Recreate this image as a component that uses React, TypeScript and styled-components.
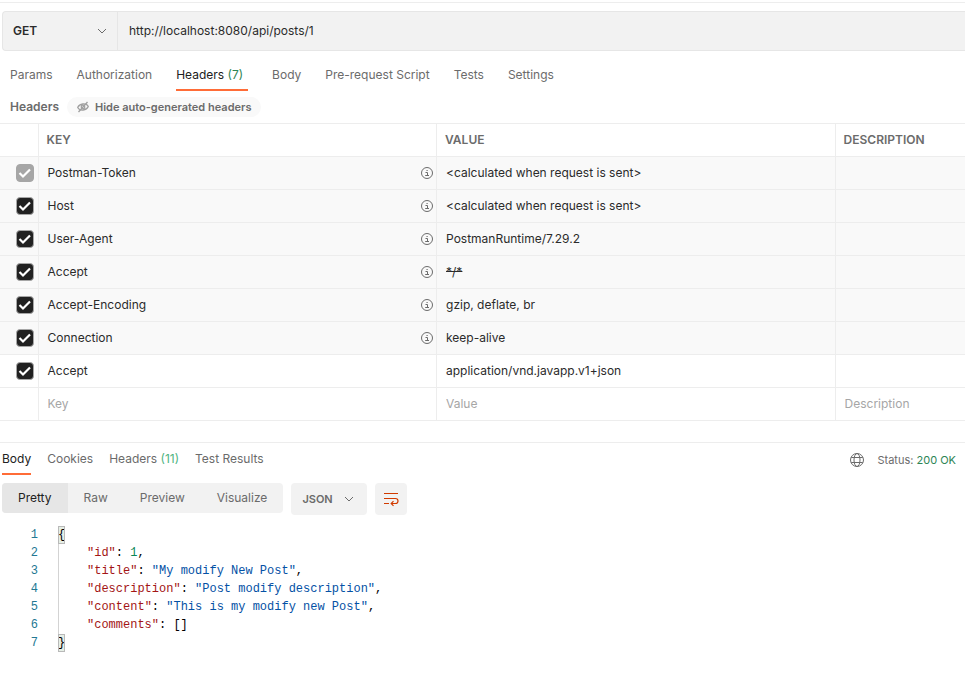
import React from "react";
import styled, { createGlobalStyle } from "styled-components";

const GlobalStyle = createGlobalStyle`
  * { box-sizing: border-box; }
  body {
    margin: 0;
    background: #fff;
    color: #2b2b2b;
    font: 12px/16px Inter, "Liberation Sans", sans-serif;
    overflow-x: hidden;
  }
  button, input, select { font: inherit; color: inherit; border: 0; margin: 0; padding: 0; background: none; }
`;

const Page = styled.main`
  display: flex;
  flex-direction: column;
  padding-top: 2px;
`;

const RequestBar = styled.form`
  border-top: 1px solid #ededed;
  padding: 8px 0 0 2px;
`;

const UrlBox = styled.div`
  display: flex;
  height: 40px;
  background: #f2f2f2;
  border: 1px solid #e6e6e6;
  border-right: 0;
  border-radius: 4px 0 0 4px;
`;

const MethodField = styled.div`
  display: grid;
  grid-template-columns: 1fr 12px;
  align-items: center;
  width: 115px;
  padding-right: 9px;
  border-right: 1px solid #e6e6e6;
`;

const MethodSelect = styled.select`
  appearance: none;
  grid-area: 1 / 1 / 2 / 3;
  height: 38px;
  padding-left: 10px;
  font-weight: 600;
`;

const FieldIcon = styled.span`
  grid-area: 1 / 2;
  display: flex;
  pointer-events: none;
`;

const UrlInput = styled.input`
  flex: 1;
  min-width: 0;
  padding: 0 11px;
  outline: 0;
`;

const RequestTabs = styled.nav`
  display: flex;
  gap: 24px;
  height: 32px;
  margin-top: 8px;
  padding: 0 10px;
`;

const Tab = styled.button<{ $active?: boolean; $wide?: boolean }>`
  color: ${(p) => (p.$active ? "#212121" : "#6b6b6b")};
  padding: ${(p) => (p.$wide ? "2px 5px 0 0" : "2px 0 0")};
  border-bottom: 2px solid ${(p) => (p.$active ? "#ff6c37" : "transparent")};
  white-space: nowrap;
`;

const Count = styled.span<{ $light?: boolean }>`
  color: ${(p) => (p.$light ? "#4fb47f" : "#2e8555")};
`;

const HeadersBar = styled.div`
  display: flex;
  align-items: center;
  gap: 8px;
  height: 32px;
  padding-left: 10px;
`;

const SectionTitle = styled.h2`
  margin: 0;
  font-size: 12px;
  font-weight: 600;
  color: #6b6b6b;
`;

const HideButton = styled.button`
  display: flex;
  align-items: center;
  gap: 6px;
  height: 20px;
  padding: 0 10px;
  border-radius: 10px;
  background: #f9f9f9;
  color: #6b6b6b;
  font-size: 11px;
  font-weight: 600;
`;

const HeaderTable = styled.table`
  width: 100%;
  table-layout: fixed;
  border-collapse: collapse;
  border-top: 1px solid #ededed;
`;

const CheckCol = styled.col`width: 38px;`;
const MainCol = styled.col`width: 41.3%;`;
const RestCol = styled.col`width: auto;`;

const Row = styled.tr<{ $auto?: boolean }>`
  height: 33px;
  background: ${(p) => (p.$auto ? "#f9f9f9" : "#fff")};
  border-bottom: 1px solid #ededed;
`;

const HeadCell = styled.th`
  padding: 0 8px;
  text-align: left;
  font-weight: 600;
  color: #6b6b6b;
  & + & { border-left: 1px solid #ededed; }
`;

const Cell = styled.td<{ $struck?: boolean }>`
  padding: 0 3px 0 9px;
  text-decoration: ${(p) => (p.$struck ? "line-through" : "none")};
  & + & { border-left: 1px solid #ededed; }
`;

const CheckCell = styled(Cell)`
  padding: 0 0 0 16px;
`;

const KeyContent = styled.div`
  display: flex;
  align-items: center;
  justify-content: space-between;
`;

const CellInput = styled.input`
  display: block;
  width: 100%;
  outline: 0;
  &::placeholder { color: #a6a6a6; opacity: 1; }
`;

const CheckBox = styled.label`
  display: grid;
  width: 18px;
  height: 18px;
`;

const CheckInput = styled.input`
  appearance: none;
  grid-area: 1 / 1;
  border-radius: 4px;
  border: 1px solid #a6a6a6;
  background: #fff;
  &:checked { background: #212121; }
  &:disabled { background: #a6a6a6; }
`;

const CheckMark = styled.svg`
  grid-area: 1 / 1;
  pointer-events: none;
`;

const Response = styled.section`
  margin-top: 21px;
  border-top: 1px solid #ededed;
`;

const ResponseHead = styled.header`
  display: flex;
  justify-content: space-between;
  height: 32px;
  padding: 0 9px 0 2px;
`;

const ResponseTabs = styled.nav`
  display: flex;
  gap: 16px;
`;

const Status = styled.div`
  display: flex;
  align-items: center;
  gap: 13px;
  padding-top: 1px;
  font-size: 11px;
  color: #6b6b6b;
`;

const Toolbar = styled.div`
  display: flex;
  align-items: flex-start;
  gap: 8px;
  padding: 8px 0 0 2px;
`;

const Modes = styled.div`
  display: flex;
  height: 30px;
  border-radius: 4px;
  background: #f2f2f2;
  overflow: hidden;
`;

const Mode = styled.button<{ $active?: boolean }>`
  padding: 0 16px;
  color: ${(p) => (p.$active ? "#212121" : "#6b6b6b")};
  background: ${(p) => (p.$active ? "#e6e6e6" : "transparent")};
`;

const FormatField = styled.div`
  display: grid;
  grid-template-columns: 1fr 12px;
  align-items: center;
  width: 76px;
  height: 32px;
  padding-right: 12px;
  border-radius: 4px;
  background: #f2f2f2;
`;

const FormatSelect = styled.select`
  appearance: none;
  grid-area: 1 / 1 / 2 / 3;
  height: 32px;
  padding-left: 11px;
  font-size: 11px;
  font-weight: 600;
  color: #6b6b6b;
`;

const WrapButton = styled.button`
  display: grid;
  place-items: center;
  width: 32px;
  height: 32px;
  border-radius: 4px;
  background: #f2f2f2;
`;

const Editor = styled.div`
  display: flex;
  margin-top: 11px;
  font: 12px/18px "Liberation Mono", monospace;
`;

const Gutter = styled.div`
  width: 38px;
  text-align: right;
  color: #237893;
`;

const Code = styled.div`
  margin-left: 20px;
  white-space: pre;
  color: #000;
`;

const Nested = styled.div`
  padding-left: 28px;
  border-left: 1px solid #d3d3d3;
`;

const Brace = styled.span`
  display: block;
  width: 7px;
  height: 18px;
  background: #e6efe6;
  outline: 1px solid #b9b9b9;
  outline-offset: -1px;
`;

const Name = styled.span`color: #a31515;`;
const Text = styled.span`color: #0451a5;`;
const Num = styled.span`color: #098658;`;

const Chevron = () => (
  <svg width="12" height="12" viewBox="0 0 12 12" fill="none" stroke="#6b6b6b" aria-hidden="true">
    <path d="M2 4l4 4 4-4" />
  </svg>
);

const InfoIcon = () => (
  <svg width="12" height="12" viewBox="0 0 12 12" fill="none" stroke="#6b6b6b" aria-hidden="true">
    <circle cx="6" cy="6" r="5.5" />
    <path d="M4.5 5.5H6.500v3M4.200 8.500H8M5.500 3.500h1.200" />
  </svg>
);

const HiddenEyeIcon = () => (
  <svg width="12" height="12" viewBox="0 0 12 12" fill="none" stroke="#a0a0a0" strokeWidth="1.3" aria-hidden="true">
    <path d="M.7 6.5C2.5 2.5 9 1.5 11.3 5.5 9.5 9.5 3 10.5 .7 6.5z" />
    <circle cx="6" cy="6" r="1.8" />
    <path d="M1.5 11L10.5 1" />
  </svg>
);

const GlobeIcon = () => (
  <svg width="14" height="14" viewBox="0 0 14 14" fill="none" stroke="#6b6b6b" aria-hidden="true">
    <circle cx="7" cy="7" r="6.5" />
    <ellipse cx="7" cy="7" rx="3" ry="6.5" />
    <path d="M1.2 4.5h11.6M1.2 9.5h11.6" />
  </svg>
);

const WrapIcon = () => (
  <svg width="16" height="16" viewBox="0 0 16 16" fill="none" stroke="#d13b00" strokeWidth="1.2" aria-hidden="true">
    <path d="M1 2.5h14M1 7.5h11.5a2.500 2.500 0 010 5H8.500M1 12.500h5M10.500 10.200L8.200 12.500l2.300 2.300" />
  </svg>
);

const requestTabs = ["Params", "Authorization", "Headers", "Body", "Pre-request Script", "Tests", "Settings"];
const modes = ["Pretty", "Raw", "Preview", "Visualize"];

const headers = [
  { key: "Postman-Token", value: "<calculated when request is sent>", auto: true, locked: true },
  { key: "Host", value: "<calculated when request is sent>", auto: true },
  { key: "User-Agent", value: "PostmanRuntime/7.29.2", auto: true },
  { key: "Accept", value: "*/*", auto: true, struck: true },
  { key: "Accept-Encoding", value: "gzip, deflate, br", auto: true },
  { key: "Connection", value: "keep-alive", auto: true },
  { key: "Accept", value: "application/vnd.javapp.v1+json" },
];

const fields: [string, React.ReactNode][] = [
  ["id", <Num>1</Num>],
  ["title", <Text>"My modify New Post"</Text>],
  ["description", <Text>"Post modify description"</Text>],
  ["content", <Text>"This is my modify new Post"</Text>],
  ["comments", "[]"],
];

export default function App() {
  return (
    <>
      <GlobalStyle />
      <Page>
        <RequestBar onSubmit={(e) => e.preventDefault()}>
          <UrlBox>
            <MethodField>
              <MethodSelect aria-label="Method">
                <option>GET</option>
              </MethodSelect>
              <FieldIcon><Chevron /></FieldIcon>
            </MethodField>
            <UrlInput aria-label="Request URL" defaultValue="http://localhost:8080/api/posts/1" />
          </UrlBox>
        </RequestBar>
        <RequestTabs>
          {requestTabs.map((t) => (
            <Tab key={t} $active={t === "Headers"} $wide={t === "Headers"}>
              {t}{t === "Headers" && <Count> (7)</Count>}
            </Tab>
          ))}
        </RequestTabs>
        <HeadersBar>
          <SectionTitle>Headers</SectionTitle>
          <HideButton><HiddenEyeIcon />Hide auto-generated headers</HideButton>
        </HeadersBar>
        <HeaderTable>
          <colgroup><CheckCol /><MainCol /><MainCol /><RestCol /></colgroup>
          <thead>
            <Row>
              <HeadCell aria-label="Enabled" />
              <HeadCell>KEY</HeadCell>
              <HeadCell>VALUE</HeadCell>
              <HeadCell>DESCRIPTION</HeadCell>
            </Row>
          </thead>
          <tbody>
            {headers.map((h, i) => (
              <Row key={i} $auto={h.auto}>
                <CheckCell>
                  <CheckBox>
                    <CheckInput type="checkbox" defaultChecked disabled={h.locked} aria-label={`Send ${h.key}`} />
                    <CheckMark width="18" height="18" viewBox="0 0 18 18" fill="none" stroke="#fff" strokeWidth="2.2">
                      <path d="M3.5 9l3.5 3.5 7-7" />
                    </CheckMark>
                  </CheckBox>
                </CheckCell>
                <Cell><KeyContent>{h.key}{h.auto && <InfoIcon />}</KeyContent></Cell>
                <Cell $struck={h.struck}>{h.value}</Cell>
                <Cell />
              </Row>
            ))}
            <Row>
              <Cell />
              <Cell><CellInput aria-label="Key" placeholder="Key" /></Cell>
              <Cell><CellInput aria-label="Value" placeholder="Value" /></Cell>
              <Cell><CellInput aria-label="Description" placeholder="Description" /></Cell>
            </Row>
          </tbody>
        </HeaderTable>
        <Response>
          <ResponseHead>
            <ResponseTabs>
              <Tab $active>Body</Tab>
              <Tab>Cookies</Tab>
              <Tab>Headers <Count $light>(11)</Count></Tab>
              <Tab>Test Results</Tab>
            </ResponseTabs>
            <Status><GlobeIcon /><span>Status: <Count>200 OK</Count></span></Status>
          </ResponseHead>
          <Toolbar>
            <Modes>
              {modes.map((m) => <Mode key={m} $active={m === "Pretty"}>{m}</Mode>)}
            </Modes>
            <FormatField>
              <FormatSelect aria-label="Format"><option>JSON</option></FormatSelect>
              <FieldIcon><Chevron /></FieldIcon>
            </FormatField>
            <WrapButton aria-label="Wrap lines"><WrapIcon /></WrapButton>
          </Toolbar>
          <Editor>
            <Gutter>{[1, 2, 3, 4, 5, 6, 7].map((n) => <div key={n}>{n}</div>)}</Gutter>
            <Code>
              <Brace>{"{"}</Brace>
              <Nested>
                {fields.map(([name, value], i) => (
                  <div key={name}>
                    <Name>"{name}"</Name>: {value}{i < fields.length - 1 && ","}
                  </div>
                ))}
              </Nested>
              <Brace>{"}"}</Brace>
            </Code>
          </Editor>
        </Response>
      </Page>
    </>
  );
}
